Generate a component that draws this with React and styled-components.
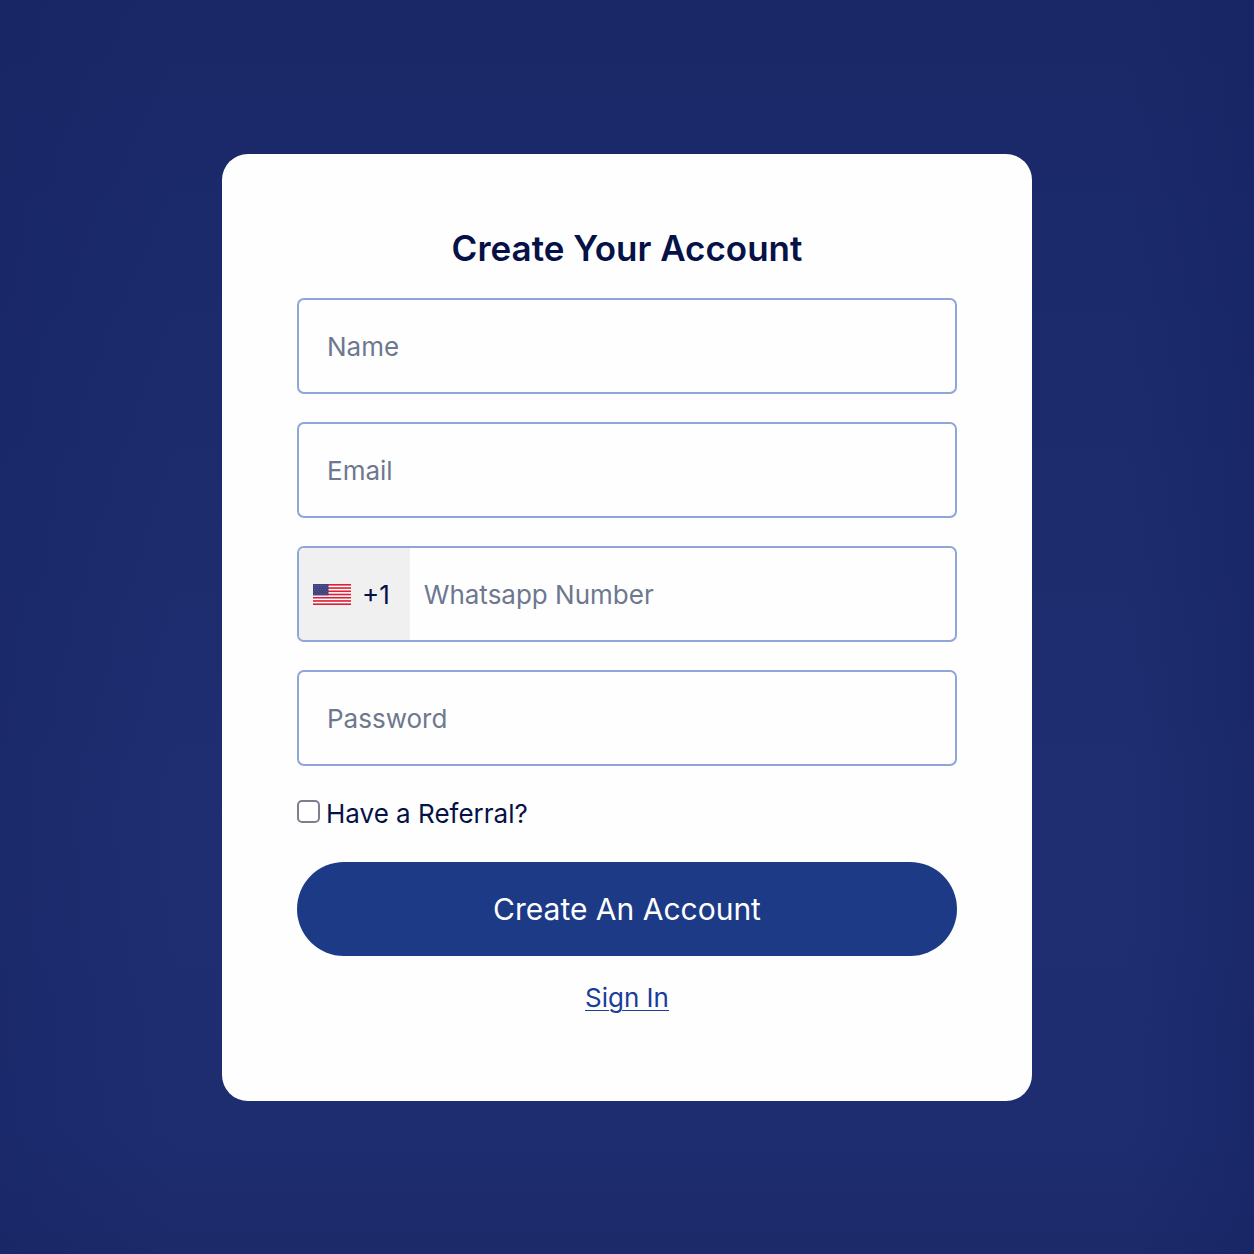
import React from "react";
import styled, { createGlobalStyle } from "styled-components";

const GlobalStyle = createGlobalStyle`
  *, *::before, *::after { box-sizing: border-box; }
  body {
    margin: 0;
    font-family: Inter, "Liberation Sans", sans-serif;
    color: #061247;
    background: #1b2a6b;
  }
  input, button { font: inherit; color: inherit; }
`;

const Page = styled.main`
  min-height: 100vh;
  display: flex;
  align-items: center;
  justify-content: center;
  padding: 24px;
  background:
    linear-gradient(90deg, rgba(20, 34, 98, 0.35), transparent 14%, transparent 90%, rgba(20, 34, 98, 0.45)),
    linear-gradient(180deg, #1a2868 0%, #1c2b6c 30%, #1f2e70 65%, #1e2d70 90%, #1c2a6a 100%);
`;

const Card = styled.form`
  width: 100%;
  max-width: 810px;
  padding: 75px;
  display: flex;
  flex-direction: column;
  background: #fefefe;
  border-radius: 26px;
`;

const Title = styled.h1`
  margin: 0 0 30px;
  font-size: 35px;
  line-height: 39px;
  font-weight: 600;
  text-align: center;
`;

const Fields = styled.div`
  display: flex;
  flex-direction: column;
  gap: 28px;
`;

const Field = styled.div`
  display: flex;
  height: 96px;
  border: 2px solid #8fa6da;
  border-radius: 7px;
  overflow: hidden;

  &:focus-within { border-color: #1c3a86; }
`;

const TextInput = styled.input`
  flex: 1;
  min-width: 0;
  padding: 2px ${(p) => (p.$compact ? "14px" : "28px")} 0;
  border: 0;
  outline: 0;
  background: transparent;
  font-size: 26px;

  &::placeholder { color: #6d788f; opacity: 1; }
`;

const CountryButton = styled.button`
  display: flex;
  align-items: center;
  gap: 11px;
  padding: 2px 20px 0 14px;
  border: 0;
  background: #f0f0f1;
  font-size: 26px;
  cursor: pointer;
`;

const ReferralRow = styled.div`
  display: flex;
  align-items: center;
  gap: 6px;
  margin: 30px 0;
`;

const Checkbox = styled.input`
  appearance: none;
  width: 23px;
  height: 23px;
  margin: 0 0 4px;
  border: 2px solid #7d808c;
  border-radius: 5px;
  background: #fff;

  &:checked { background: #1c3a86; box-shadow: inset 0 0 0 3px #fff; }
`;

const ReferralLabel = styled.label`
  font-size: 26px;
  line-height: 36px;
`;

const SubmitButton = styled.button`
  height: 94px;
  border: 0;
  border-radius: 47px;
  background: #1c3a86;
  color: #fff;
  font-size: 30px;
  cursor: pointer;
`;

const SignInLink = styled.a`
  align-self: center;
  margin: 24px 0 10px;
  color: #1b3c9b;
  font-size: 26px;
  line-height: 36px;
  text-decoration: underline;
  text-decoration-thickness: 1px;
  text-underline-offset: 3px;
`;

const stripes = [0, 1, 2, 3, 4, 5, 6];
const starRows = [0, 1, 2, 3, 4];

function UsFlag() {
  return (
    <svg width="38" height="21" viewBox="0 0 38 21" aria-hidden="true">
      <rect width="38" height="21" fill="#fff" />
      {stripes.map((i) => (
        <rect key={i} y={(i * 2 * 21) / 13} width="38" height={21 / 13} fill="#dc1f35" />
      ))}
      <rect width="15.5" height="11.3" fill="#40427f" />
      {starRows.map((row) =>
        [0, 1, 2, 3, 4].map((col) => (
          <circle
            key={`${row}-${col}`}
            cx={1.6 + col * 2.8 + (row % 2) * 1.2}
            cy={1.5 + row * 2.1}
            r="0.4"
            fill="#9296bd"
          />
        ))
      )}
    </svg>
  );
}

export default function App() {
  return (
    <>
      <GlobalStyle />
      <Page>
        <Card onSubmit={(e) => e.preventDefault()}>
          <Title>Create Your Account</Title>
          <Fields>
            <Field>
              <TextInput type="text" placeholder="Name" aria-label="Name" />
            </Field>
            <Field>
              <TextInput type="email" placeholder="Email" aria-label="Email" />
            </Field>
            <Field>
              <CountryButton type="button" aria-label="Country code +1">
                <UsFlag />
                <span>+1</span>
              </CountryButton>
              <TextInput $compact type="tel" placeholder="Whatsapp Number" aria-label="Whatsapp Number" />
            </Field>
            <Field>
              <TextInput type="password" placeholder="Password" aria-label="Password" />
            </Field>
          </Fields>
          <ReferralRow>
            <Checkbox id="referral" type="checkbox" />
            <ReferralLabel htmlFor="referral">Have a Referral?</ReferralLabel>
          </ReferralRow>
          <SubmitButton type="submit">Create An Account</SubmitButton>
          <SignInLink href="#sign-in">Sign In</SignInLink>
        </Card>
      </Page>
    </>
  );
}
